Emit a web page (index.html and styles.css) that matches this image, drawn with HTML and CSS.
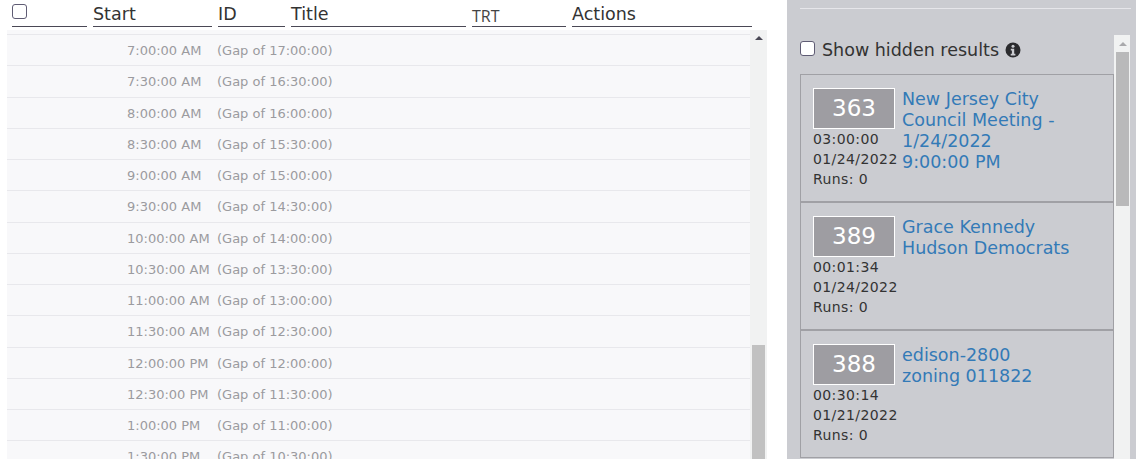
FILE: index.html
```html
<!DOCTYPE html>
<html lang="en">
<head>
  <meta charset="UTF-8">
  <meta name="viewport" content="width=device-width, initial-scale=1.0">
  <title>Schedule</title>
  <link rel="stylesheet" href="styles.css">
</head>
<body>
  <div class="page">
    <div class="schedule">
      <div class="schedule-head">
        <div class="head-cell col-check"><input type="checkbox" class="check"></div>
        <div class="head-cell col-start">Start</div>
        <div class="head-cell col-id">ID</div>
        <div class="head-cell col-title">Title</div>
        <div class="head-cell col-trt small">TRT</div>
        <div class="head-cell col-actions">Actions</div>
      </div>
      <div class="schedule-body">
        <div class="rows">
          <div class="gap-row"><span class="gap-time">7:00:00 AM</span><span>(Gap of 17:00:00)</span></div>
          <div class="gap-row"><span class="gap-time">7:30:00 AM</span><span>(Gap of 16:30:00)</span></div>
          <div class="gap-row"><span class="gap-time">8:00:00 AM</span><span>(Gap of 16:00:00)</span></div>
          <div class="gap-row"><span class="gap-time">8:30:00 AM</span><span>(Gap of 15:30:00)</span></div>
          <div class="gap-row"><span class="gap-time">9:00:00 AM</span><span>(Gap of 15:00:00)</span></div>
          <div class="gap-row"><span class="gap-time">9:30:00 AM</span><span>(Gap of 14:30:00)</span></div>
          <div class="gap-row"><span class="gap-time">10:00:00 AM</span><span>(Gap of 14:00:00)</span></div>
          <div class="gap-row"><span class="gap-time">10:30:00 AM</span><span>(Gap of 13:30:00)</span></div>
          <div class="gap-row"><span class="gap-time">11:00:00 AM</span><span>(Gap of 13:00:00)</span></div>
          <div class="gap-row"><span class="gap-time">11:30:00 AM</span><span>(Gap of 12:30:00)</span></div>
          <div class="gap-row"><span class="gap-time">12:00:00 PM</span><span>(Gap of 12:00:00)</span></div>
          <div class="gap-row"><span class="gap-time">12:30:00 PM</span><span>(Gap of 11:30:00)</span></div>
          <div class="gap-row"><span class="gap-time">1:00:00 PM</span><span>(Gap of 11:00:00)</span></div>
          <div class="gap-row"><span class="gap-time">1:30:00 PM</span><span>(Gap of 10:30:00)</span></div>
        </div>
        <div class="scrollbar bar-main">
          <div class="arrow"></div>
          <div class="thumb"></div>
        </div>
      </div>
    </div>

    <div class="side">
      <hr class="side-rule">
      <div class="side-body">
        <div class="results">
          <label class="show-hidden">
            <input type="checkbox" class="check">
            <span>Show hidden results</span>
            <svg class="info" viewBox="0 0 16 16" width="16" height="16">
              <circle cx="8" cy="8" r="7.5" fill="#2b2b2e"/>
              <circle cx="8" cy="4.2" r="1.5" fill="#cbccd1"/>
              <path d="M5.8 6.8h3.4v5h1.2v1.6H5.7v-1.6h1.2V8.4H5.8z" fill="#cbccd1"/>
            </svg>
          </label>
          <div class="card">
            <div class="card-meta">
              <div class="card-num">363</div>
              <div>03:00:00</div>
              <div>01/24/2022</div>
              <div>Runs: 0</div>
            </div>
            <a class="card-title">New Jersey City Council Meeting - 1/24/2022 9:00:00&nbsp;PM</a>
          </div>
          <div class="card">
            <div class="card-meta">
              <div class="card-num">389</div>
              <div>00:01:34</div>
              <div>01/24/2022</div>
              <div>Runs: 0</div>
            </div>
            <a class="card-title">Grace Kennedy Hudson Democrats</a>
          </div>
          <div class="card">
            <div class="card-meta">
              <div class="card-num">388</div>
              <div>00:30:14</div>
              <div>01/21/2022</div>
              <div>Runs: 0</div>
            </div>
            <a class="card-title">edison-2800 zoning 011822</a>
          </div>
        </div>
        <div class="scrollbar bar-side">
          <div class="arrow"></div>
          <div class="thumb"></div>
        </div>
      </div>
    </div>
  </div>
</body>
</html>
```

FILE: styles.css
```css
html, body {
  margin: 0;
  padding: 0;
  height: 459px;
  overflow: hidden;
  background-color: #fff;
}

body {
  font-family: "DejaVu Sans", Verdana, sans-serif;
  color: #333;
}

.page {
  display: flex;
  height: 459px;
  overflow: hidden;
}

/* Left: schedule table */
.schedule {
  width: 760px;
  margin-left: 7px;
  flex: none;
}

.schedule-head {
  display: flex;
  gap: 6px;
  height: 27px;
  padding-left: 5px;
  margin-bottom: 3px;
}

.head-cell {
  border-bottom: 1px solid #4a4855;
  font-size: 17.5px;
  line-height: 28px;
  box-sizing: border-box;
  height: 27px;
}

.col-check { width: 75px; }
.col-start { width: 119px; }
.col-id { width: 67px; }
.col-title { width: 175px; }
.col-trt { width: 94px; }
.col-actions { width: 180px; }

.small {
  font-family: "Open Sans", sans-serif;
  font-size: 16px;
  line-height: 32px;
  color: #444;
}

.check {
  appearance: none;
  margin: 4px 0 0;
  width: 15px;
  height: 15px;
  display: block;
  box-sizing: border-box;
  border: 1px solid #5f5c74;
  border-radius: 3px;
  background-color: #fff;
}

.schedule-body {
  display: flex;
  height: 429px;
  overflow: hidden;
}

.rows {
  width: 743px;
  flex: none;
  background-color: #f8f8fa;
  padding-top: 4px;
}

.gap-row {
  display: flex;
  box-sizing: border-box;
  height: 31.25px;
  border-top: 1px solid #e8e8ec;
  font-size: 13px;
  line-height: 32.5px;
  color: #9b9b9f;
}

.gap-time {
  flex: none;
  width: 90px;
  padding-left: 120px;
  white-space: nowrap;
}

.scrollbar {
  background-color: #f1f2f2;
  flex: none;
  box-sizing: border-box;
}

.bar-main {
  width: 17px;
  padding: 0 2px;
}

.bar-main .arrow {
  margin: 6px auto 0;
  border-left: 4px solid transparent;
  border-right: 4px solid transparent;
  border-bottom: 4px solid #4a4855;
  width: 0;
}

.bar-main .thumb {
  margin-top: 305px;
  height: 200px;
  background-color: #c1c1c1;
}

/* Right: results panel */
.side {
  margin-left: 20px;
  width: 349px;
  flex: none;
  background-color: #cbccd1;
  height: 459px;
  box-sizing: border-box;
  padding-left: 13px;
}

.side-rule {
  margin: 8px 5px 0 0;
  border: none;
  border-top: 1px solid #e6e6ea;
}

.side-body {
  display: flex;
  margin-top: 26px;
}

.results {
  width: 314px;
  flex: none;
}

.show-hidden {
  display: flex;
  align-items: center;
  gap: 7px;
  height: 39px;
  box-sizing: border-box;
  padding-bottom: 10px;
  font-size: 17.5px;
}

.show-hidden .check {
  margin: 0 0 3px;
}

.info {
  margin-left: -1px;
}

.card {
  display: flex;
  align-items: flex-start;
  gap: 5px;
  box-sizing: border-box;
  height: 128px;
  padding: 13px 12px 0;
  border: 1px solid #a0a0a5;
  font-size: 14px;
  line-height: 20px;
}

.card-meta {
  width: 84px;
  flex: none;
  white-space: nowrap;
  letter-spacing: 0.4px;
}

.card-num {
  box-sizing: border-box;
  width: 82px;
  height: 41px;
  border: 1px solid #fff;
  background-color: #9e9da2;
  color: #fff;
  text-align: center;
  font-size: 23px;
  line-height: 39px;
  letter-spacing: 0;
}

.card-title {
  color: #337ab7;
  font-size: 17.5px;
  line-height: 21px;
  width: 170px;
  padding-top: 1px;
}

.bar-side {
  width: 16px;
  padding: 0 1px 0 2px;
  height: 430px;
}

.bar-side .arrow {
  margin: 7px auto 0;
  border-left: 4px solid transparent;
  border-right: 4px solid transparent;
  border-bottom: 4px solid #a9a9ac;
  width: 0;
}

.bar-side .thumb {
  margin-top: 6px;
  height: 154px;
  background-color: #b9b9ba;
}
```
